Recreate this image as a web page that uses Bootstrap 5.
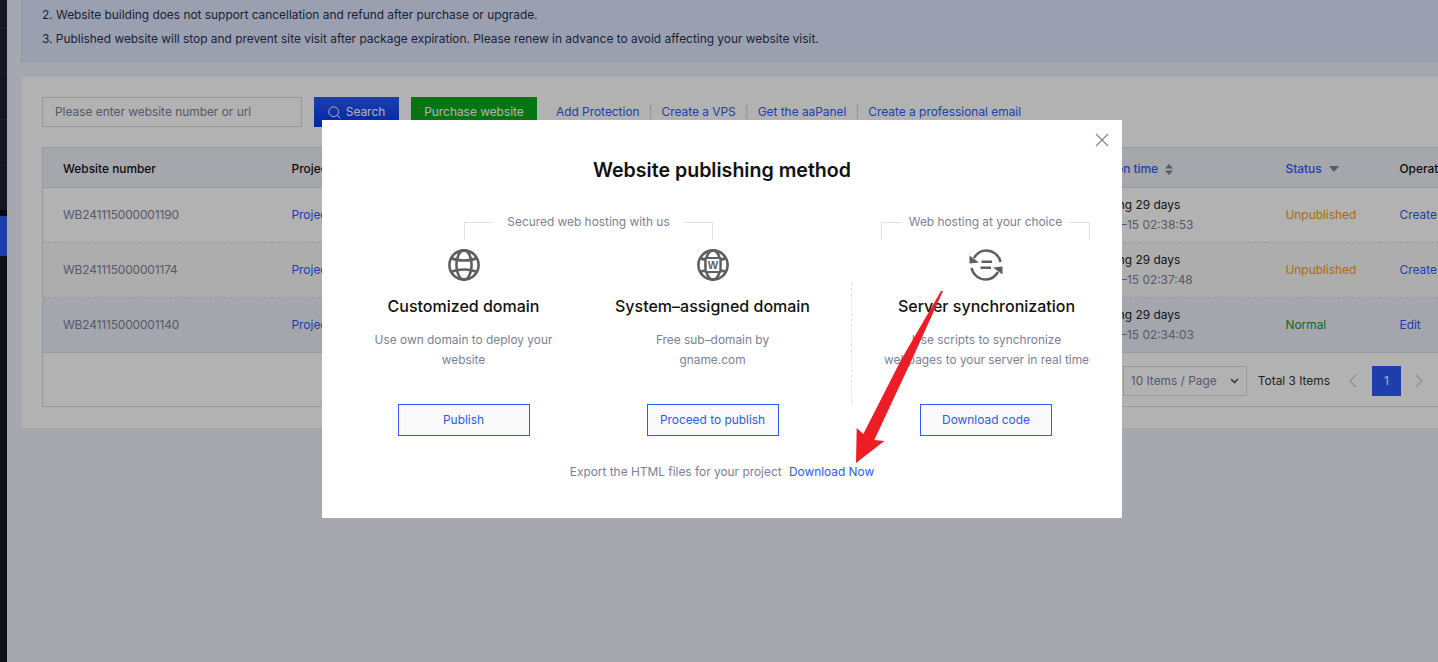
<!DOCTYPE html>
<html lang="en">
<head>
  <meta charset="UTF-8">
  <meta name="viewport" content="width=device-width, initial-scale=1.0">
  <title>Website publishing method</title>
  <link href="https://cdn.jsdelivr.net/npm/bootstrap@5.3.2/dist/css/bootstrap.min.css" rel="stylesheet">
  <script src="https://cdn.jsdelivr.net/npm/bootstrap@5.3.2/dist/js/bootstrap.bundle.min.js"></script>
  <style>
    html, body { height: 100%; overflow: hidden; }
    body { font-family: Inter, "Liberation Sans", sans-serif; font-size: 11.9px; background: #eeeffb; color: #111; }
    a { text-decoration: none; color: #2b5bf5; }

    /* sidebar sliver */
    .side-strip { width: 7px; flex: none; background: #1e2230; height: 662px; }
    .side-item { height: 46px; border-bottom: 1px solid #2b3040; }
    .side-item.is-first { height: 28px; }
    .side-item.is-short { height: 44px; border: 0; }
    .side-item.is-gap { height: 6px; border: 0; background: #0b0c10; }
    .side-item.is-active { height: 40px; border: 0; background: #2b5af5; }
    .side-rest { height: 406px; background: #15171f; }

    .page-body { width: 1500px; flex: none; padding-left: 14px; }
    .notice-box { height: 62px; padding: 3px 20px 0; background: #dfe6fd; border: 1px solid #ccd8fb; border-top: 0; line-height: 24px; color: #24304f; }
    .work-panel { margin-top: 15px; margin-left: 1px; padding: 20px 20px 21px; background: #fff; height: 351px; }

    .search-input { width: 260px; height: 30px; border: 1px solid #dcdfe6; padding: 0 12px; color: #7c8198; line-height: 28px; }
    .btn-solid { height: 30px; border: 0; border-radius: 0; color: #fff; font-size: 11.9px; padding: 0; display: flex; align-items: center; justify-content: center; gap: 5px; }
    .btn-search { width: 85px; margin-left: 12px; background: linear-gradient(#2b5af5, #0038f0); }
    .btn-buy { width: 126px; margin-left: 12px; background: #06a817; }
    .tool-links { margin-left: 19px; }
    .tool-links span { color: #c6cbd8; margin: 0 9px; }

    .site-table { width: 1417px; table-layout: fixed; border: 1px solid #dcdfe6; border-collapse: collapse; }
    .site-table th { height: 40px; padding: 2px 0 0 20px; background: #edf0f7; font-weight: 500; border-bottom: 1px solid #dcdfe6; vertical-align: middle; }
    .site-table td { height: 55px; padding: 0 0 0 20px; vertical-align: middle; border-bottom: 1px dashed #dcdfe6; line-height: 20px; color: #7c8198; }
    .site-table td.site-id { letter-spacing: -.12px; }
    .site-table tr.row-hover td { background: #ebeefa; border-bottom: 1px solid #dcdfe6; }
    .site-table tr.row-tint td { background: #f8f8f8; }
    .site-table .foot-cell { height: 54px; padding: 0 35px 0 0; border-bottom: 0; background: #fff; }
    .site-table .cell-dark { color: #222; }
    .site-table td.text-unpub { color: #f09a16; }
    .site-table td.text-normal { color: #0c9e1b; }
    .th-link { color: #2b5bf5; }
    .sort-mark { display: inline-block; vertical-align: middle; margin-left: 4px; }
    .foot-row { padding-top: 2px; }
    .page-select { width: 124px; height: 30px; border: 1px solid #dcdfe6; padding: 0 7px; color: #7c8198; }
    .page-total { margin-left: 11px; color: #333; }
    .page-num { width: 29px; height: 30px; background: #2b5af5; color: #fff; margin: 0 14px 0 15px; }
    .page-arrow { width: 8px; height: 14px; margin-left: 0; }
    .page-arrow-prev { margin-left: 19px; }

    /* backdrop and dialog */
    .dim-layer { position: fixed; inset: 0; background: rgba(0, 0, 0, .3); }
    .publish-dialog { position: fixed; left: 322px; top: 120px; width: 800px; height: 398px; background: #fff; padding: 35px 0 0 17px; }
    .dialog-close { position: absolute; top: 13px; right: 13px; width: 14px; height: 14px; background: none; border: 0; padding: 0; display: flex; }
    .dialog-title { font-size: 19.6px; font-weight: 600; line-height: 30px; margin: 0 17px 27px 0; text-align: center; color: #111; }
    .own-group { width: 498px; flex: none; }
    .other-group { width: 270px; flex: none; margin-left: 14px; }
    .group-head { height: 28px; display: flex; color: #7c8198; line-height: 20px; }
    .own-group .group-head { margin: 0 124px 0 125px; }
    .other-group .group-head { margin: 0 31px 0 30px; }
    .bracket-l, .bracket-r { flex: 1; margin-top: 10px; height: 18px; border-top: 1px solid #dde1ea; }
    .bracket-l { border-left: 1px solid #dde1ea; margin-right: 14px; }
    .bracket-r { border-right: 1px solid #dde1ea; margin-left: 14px; }
    .other-group .bracket-l { margin-right: 7px; }
    .other-group .bracket-r { margin-left: 7px; }
    .way-col { width: 249px; text-align: center; }
    .other-group .way-col { width: 100%; }
    .way-icon { display: block; margin: 9px auto 0; width: 32px; height: 32px; overflow: visible; }
    .way-title { font-size: 16px; font-weight: 500; line-height: 24px; margin: 13px 0 12px; color: #111; }
    .way-desc { line-height: 20px; height: 40px; color: #7c8198; margin: 0; }
    .way-btn { width: 132px; height: 32px; margin-top: 34px; border: 1px solid #2b5bf5; background: #fafafa; color: #2b5bf5; border-radius: 0; font-size: 11.9px; padding: 0; }
    .way-dashed { margin-top: 2px; padding-top: 11px; height: 120px; border-left: 1px dashed #dde1ea; }
    .way-dashed .way-title { margin-top: 0; }
    .way-dashed + .way-btn { margin-top: 1px; }
    .export-line { margin: 26px 17px 0 0; line-height: 20px; color: #7c8198; text-align: center; }
    .export-line a { margin-left: 4px; }
    .icon-letter { font-family: "Liberation Sans", sans-serif; font-size: 11px; font-weight: 700; fill: #5f5f5f; }
    .red-arrow { position: fixed; left: 850px; top: 285px; }
  </style>
</head>
<body>
  <div class="d-flex">
    <div class="side-strip">
      <div class="side-item is-first"></div>
      <div class="side-item"></div>
      <div class="side-item"></div>
      <div class="side-item"></div>
      <div class="side-item is-short"></div>
      <div class="side-item is-gap"></div>
      <div class="side-item is-active"></div>
      <div class="side-rest"></div>
    </div>

    <div class="page-body">
      <div class="notice-box">
        <div>2. Website building does not support cancellation and refund after purchase or upgrade.</div>
        <div>3. Published website will stop and prevent site visit after package expiration. Please renew in advance to avoid affecting your website visit.</div>
      </div>

      <div class="work-panel">
        <div class="d-flex align-items-center mb-3 pb-1">
          <div class="search-input">Please enter website number or url</div>
          <button class="btn btn-solid btn-search">
            <svg width="13" height="13" viewBox="0 0 13 13" fill="none" stroke="#fff" stroke-width="1"><circle cx="5.7" cy="5.7" r="4.9"/><path d="M9.2 9.2l3.2 3.2"/></svg>
            Search
          </button>
          <button class="btn btn-solid btn-buy">Purchase website</button>
          <div class="tool-links">
            <a href="#">Add Protection</a><span>|</span><a href="#">Create a VPS</a><span>|</span><a href="#">Get the aaPanel</a><span>|</span><a href="#">Create a professional email</a>
          </div>
        </div>

        <table class="site-table">
          <colgroup>
            <col style="width:229px"><col style="width:782px"><col style="width:212px"><col style="width:114px"><col>
          </colgroup>
          <thead>
            <tr>
              <th>Website number</th>
              <th>Project</th>
              <th><span class="th-link">Expiration time</span>
                <svg class="sort-mark" width="8" height="11" viewBox="0 0 8 11" fill="#7c8198"><path d="M4 0l4 4.5H0zM4 11L0 6.5h8z"/></svg>
              </th>
              <th><span class="th-link">Status</span>
                <svg class="sort-mark" width="10" height="6" viewBox="0 0 10 6" fill="#7c8198"><path d="M0 0h10L5 6z"/></svg>
              </th>
              <th>Operation</th>
            </tr>
          </thead>
          <tbody id="site-rows"></tbody>
          <tfoot>
            <tr>
              <td colspan="5" class="foot-cell">
                <div class="foot-row d-flex align-items-center justify-content-end">
                  <div class="page-select d-flex align-items-center justify-content-between">
                    <span>10 Items / Page</span>
                    <svg width="9" height="6" viewBox="0 0 9 6" fill="none" stroke="#555" stroke-width="1.6"><path d="M1 1l3.5 3.5L8 1"/></svg>
                  </div>
                  <span class="page-total">Total 3 Items</span>
                  <svg class="page-arrow page-arrow-prev" viewBox="0 0 8 14" fill="none" stroke="#c9ccd6" stroke-width="1.2"><path d="M7 1L1 7l6 6"/></svg>
                  <div class="page-num d-flex align-items-center justify-content-center">1</div>
                  <svg class="page-arrow" viewBox="0 0 8 14" fill="none" stroke="#c9ccd6" stroke-width="1.2"><path d="M1 1l6 6-6 6"/></svg>
                </div>
              </td>
            </tr>
          </tfoot>
        </table>
      </div>
    </div>
  </div>

  <div class="dim-layer"></div>

  <div class="publish-dialog">
    <button class="dialog-close" aria-label="Close">
      <svg width="14" height="14" viewBox="0 0 14 14" fill="none" stroke="#7c8198" stroke-width="1.1"><path d="M1 1l12 12M13 1L1 13"/></svg>
    </button>
    <h2 class="dialog-title">Website publishing method</h2>

    <div class="d-flex">
      <div class="own-group">
        <div class="group-head">
          <div class="bracket-l"></div><div>Secured web hosting with us</div><div class="bracket-r"></div>
        </div>
        <div class="d-flex">
          <div class="way-col">
            <svg class="way-icon" viewBox="0 0 32 32" fill="none" stroke="#5f5f5f" stroke-width="2.6">
              <circle cx="16" cy="16" r="14.6"/><ellipse cx="16" cy="16" rx="7.6" ry="14.6"/>
              <path d="M3 9c7 3.4 19 3.4 26 0M3 23c7-3.4 19-3.4 26 0"/>
            </svg>
            <div class="way-title">Customized domain</div>
            <p class="way-desc">Use own domain to deploy your<br>website</p>
            <button class="btn way-btn">Publish</button>
          </div>
          <div class="way-col">
            <svg class="way-icon" viewBox="0 0 32 32" fill="none" stroke="#5f5f5f" stroke-width="2.6">
              <circle cx="16" cy="16" r="14.6"/><ellipse cx="16" cy="16" rx="7.6" ry="14.6"/>
              <path d="M3 9c7 3.4 19 3.4 26 0M3 23c7-3.4 19-3.4 26 0"/>
              <rect x="8.7" y="9" width="14.6" height="14" fill="#fff" stroke-width="2"/>
              <text class="icon-letter" x="16" y="20" text-anchor="middle" stroke="none">W</text>
            </svg>
            <div class="way-title">System–assigned domain</div>
            <p class="way-desc">Free sub–domain by<br>gname.com</p>
            <button class="btn way-btn">Proceed to publish</button>
          </div>
        </div>
      </div>

      <div class="other-group">
        <div class="group-head">
          <div class="bracket-l"></div><div>Web hosting at your choice</div><div class="bracket-r"></div>
        </div>
        <div class="way-col">
          <svg class="way-icon" viewBox="0 0 32 32" fill="none" stroke="#5f5f5f" stroke-width="2.5">
            <path d="M4 9C7 4 11 1.5 16 1.5c7 0 13 4.5 14.5 11.5M28 23c-3 5-7 7.5-12 7.5-7 0-13-4.5-14.5-11.5"/>
            <path d="M-.5 6.5v8l9.5-1zM32.5 25.5v-8l-9.5 1z" fill="#5f5f5f" stroke="none"/>
            <path d="M11.5 12.7H22M10.5 18.7H21"/>
          </svg>
          <div class="way-dashed">
            <div class="way-title">Server synchronization</div>
            <p class="way-desc">Use scripts to synchronize<br>webpages to your server in real time</p>
          </div>
          <button class="btn way-btn">Download code</button>
        </div>
      </div>
    </div>

    <div class="export-line">Export the HTML files for your project <a href="#">Download Now</a></div>
  </div>

  <svg class="red-arrow" width="100" height="185" viewBox="850 285 100 185">
    <path d="M943 291L911.7 360L874.3 440L884.3 441L856 463L856.7 428L863.3 434L901 360L941 291Z" fill="#ee1c25"/>
  </svg>

  <script>
    // table rows for the three sites behind the dialog
    const sites = [
      { id: 'WB241115000001190', time: '2024–12–15 02:38:53', status: 'Unpublished', op: 'Create' },
      { id: 'WB241115000001174', time: '2024–12–15 02:37:48', status: 'Unpublished', op: 'Create', rowClass: 'row-tint' },
      { id: 'WB241115000001140', time: '2024–12–15 02:34:03', status: 'Normal', op: 'Edit', rowClass: 'row-hover' }
    ];
    const rows = document.getElementById('site-rows');
    for (const site of sites) {
      const row = document.createElement('tr');
      row.className = site.rowClass || '';
      row.innerHTML = `
        <td class="site-id">${site.id}</td>
        <td><a href="#">Project</a></td>
        <td><div class="cell-dark">Remaining 29 days</div><div>${site.time}</div></td>
        <td class="${site.status === 'Normal' ? 'text-normal' : 'text-unpub'}">${site.status}</td>
        <td><a href="#">${site.op}</a></td>
      `;
      rows.appendChild(row);
    }
  </script>
</body>
</html>
